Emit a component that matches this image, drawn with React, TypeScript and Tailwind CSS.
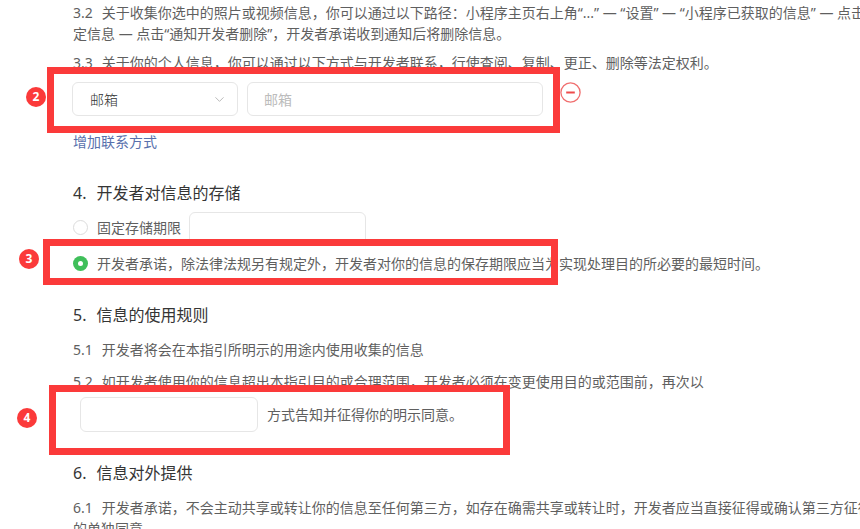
import { ChevronDown } from "lucide-react";

const font = "font-['Noto_Sans','Noto_Sans_CJK_SC',sans-serif]";

function Para({ no, children }: { no: string; children: React.ReactNode }) {
    return (
        <p className="whitespace-nowrap text-[14px] leading-[21px] text-[#5f5f5f]">
            <span className="mr-[9px]">{no}</span>
            {children}
        </p>
    );
}

function Heading({ no, title, className }: { no: string; title: string; className?: string }) {
    return (
        <h3 className={`whitespace-nowrap text-[16px] leading-[24px] text-[#353535] ${className ?? ""}`}>
            <span className="mr-[10px]">{no}</span>
            {title}
        </h3>
    );
}

function Badge({ n, className }: { n: number; className: string }) {
    return (
        <div
            className={`absolute flex h-[20px] w-[20px] items-center justify-center rounded-full bg-[#fb3a3a] text-[12px] font-bold text-white ${className}`}
        >
            {n}
        </div>
    );
}

export default function App() {
    return (
        <div className={`relative h-[529px] w-[860px] overflow-hidden bg-white ${font}`}>
            <div className="pl-[73px] pt-[2px]">
                {/* 3.2 / 3.3 */}
                <Para no="3.2">
                    关于收集你选中的照片或视频信息，你可以通过以下路径：小程序主页右上角“...” — “设置” — “小程序已获取的信息” — 点击特
                </Para>
                <p className="whitespace-nowrap text-[14px] leading-[21px] text-[#5f5f5f]">
                    定信息 — 点击“通知开发者删除”，开发者承诺收到通知后将删除信息。
                </p>
                <div className="mt-[8px]">
                    <Para no="3.3">关于你的个人信息，你可以通过以下方式与开发者联系，行使查阅、复制、更正、删除等法定权利。</Para>
                </div>

                {/* contact row */}
                <div className="-ml-px mt-[9px] flex h-[34px] items-center">
                    <div className="flex h-[34px] w-[166px] items-center justify-between rounded-[6px] border border-[#e6e6e6] pl-[17px] pr-[10px] text-[14px] font-light text-[#333]">
                        邮箱
                        <ChevronDown size={15} strokeWidth={1.3} className="text-[#aaa]" />
                    </div>
                    <div className="ml-[9px] flex h-[34px] w-[296px] items-center rounded-[6px] border border-[#e6e6e6] px-[16px] text-[14px] text-[#bcbcbc]">
                        邮箱
                    </div>
                    <svg width="21" height="21" viewBox="0 0 21 21" className="ml-[17px] -mt-[14px]">
                        <circle cx="10.5" cy="10.5" r="9.6" fill="none" stroke="#f06e6e" strokeWidth="1.3" />
                        <line x1="6.2" y1="10.5" x2="14.8" y2="10.5" stroke="#ee4b4b" strokeWidth="2" />
                    </svg>
                </div>
                <a className="mt-[15px] block text-[14px] leading-[21px] text-[#5870ac]">增加联系方式</a>

                {/* 4 */}
                <Heading no="4." title="开发者对信息的存储" className="mt-[29px]" />
                <div className="mt-[7px] flex h-[34px] items-center">
                    <span className="-mt-[4px] h-[15px] w-[15px] rounded-full border border-[#dcdcdc]" />
                    <span className="-mt-[4px] ml-[9px] text-[14px] text-[#5f5f5f]">固定存储期限</span>
                    <div className="ml-[8px] h-[34px] w-[177px] rounded-[6px] border border-[#e6e6e6]" />
                </div>
                <div className="mt-[7px] flex items-center whitespace-nowrap text-[14px] leading-[21px] text-[#5f5f5f]">
                    <span className="flex h-[15px] w-[15px] items-center justify-center rounded-full bg-[#3fbf5a]">
                        <span className="h-[5px] w-[5px] rounded-full bg-white" />
                    </span>
                    <span className="ml-[9px]">
                        开发者承诺，除法律法规另有规定外，开发者对你的信息的保存期限应当为实现处理目的所必要的最短时间。
                    </span>
                </div>

                {/* 5 */}
                <Heading no="5." title="信息的使用规则" className="mt-[29px]" />
                <div className="mt-[12px]">
                    <Para no="5.1">开发者将会在本指引所明示的用途内使用收集的信息</Para>
                </div>
                <div className="mt-[11px]">
                    <Para no="5.2">如开发者使用你的信息超出本指引目的或合理范围，开发者必须在变更使用目的或范围前，再次以</Para>
                </div>
                <div className="ml-[7px] mt-[5px] flex h-[35px] items-center">
                    <div className="h-[35px] w-[178px] rounded-[6px] border border-[#e6e6e6]" />
                    <span className="ml-[9px] text-[14px] text-[#5f5f5f]">方式告知并征得你的明示同意。</span>
                </div>

                {/* 6 */}
                <Heading no="6." title="信息对外提供" className="mt-[29px]" />
                <div className="mt-[12px]">
                    <Para no="6.1">
                        开发者承诺，不会主动共享或转让你的信息至任何第三方，如存在确需共享或转让时，开发者应当直接征得或确认第三方征得你
                    </Para>
                    <p className="whitespace-nowrap text-[14px] leading-[21px] text-[#5f5f5f]">的单独同意。</p>
                </div>
            </div>

            {/* annotation overlays */}
            <div className="absolute left-[47px] top-[67px] h-[66px] w-[513px] border-[7px] border-[#fb3a3a]" />
            <Badge n={2} className="left-[26px] top-[87px]" />
            <div className="absolute left-[43px] top-[239px] h-[46px] w-[515px] border-[7px] border-[#fb3a3a]" />
            <Badge n={3} className="left-[19px] top-[249px]" />
            <div className="absolute left-[49px] top-[385px] h-[70px] w-[461px] border-[7px] border-[#fb3a3a]" />
            <Badge n={4} className="left-[17px] top-[408px]" />
        </div>
    );
}
